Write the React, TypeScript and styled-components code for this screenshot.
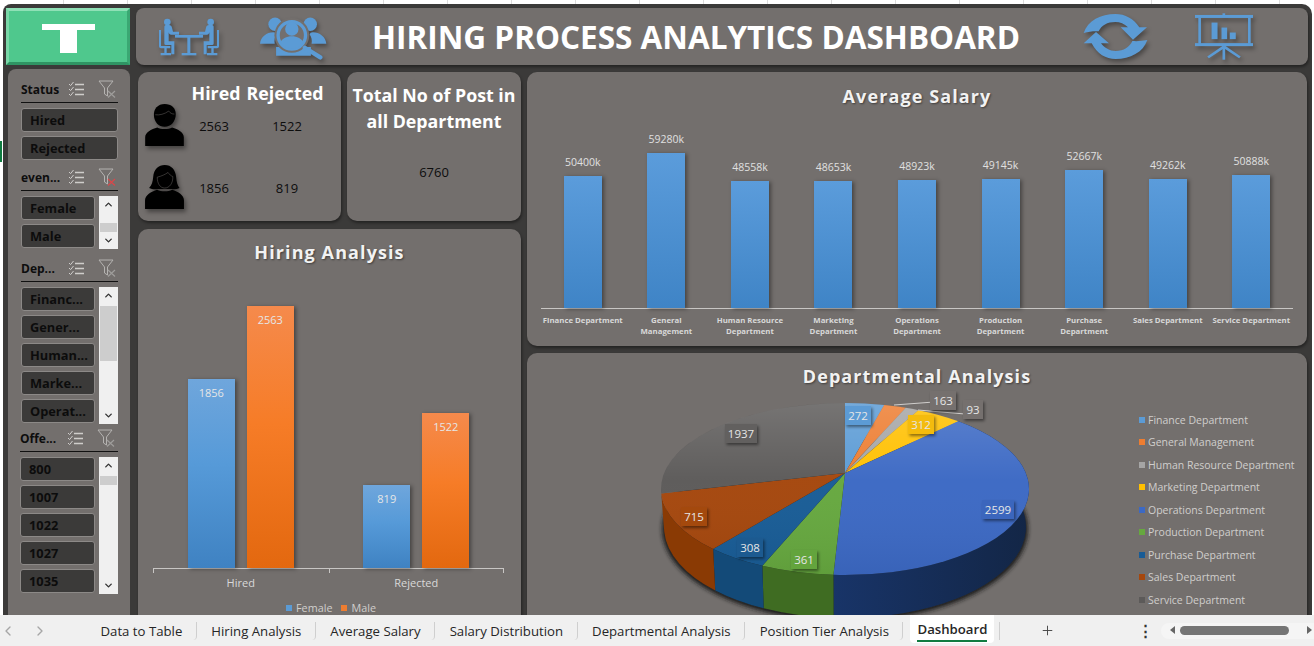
import React from "react";
import styled, { createGlobalStyle } from "styled-components";
import { ChevronLeft, ChevronRight, ChevronUp, ChevronDown, Plus } from "lucide-react";

const GlobalStyle = createGlobalStyle`
  html, body {
    margin: 0;
    padding: 0;
    overflow: hidden;
    background: #ffffff;
    font-family: "Open Sans", "Noto Sans", sans-serif;
  }
`;

const Page = styled.div`
  width: 1314px;
  height: 646px;
  display: flex;
  flex-direction: column;
  overflow: hidden;
`;

const Sheet = styled.div`
  position: relative;
  height: 616px;
  box-sizing: border-box;
  padding: 4px 2px 0 3px;
  background: repeating-linear-gradient(90deg, #ffffff 0 63px, #dcdcdc 63px 64px);
  border-top: 1px solid #c4c4c4;
  margin-top: -1px;
`;

const SelectedRow = styled.span`
  position: absolute;
  left: 0;
  top: 141px;
  width: 2px;
  height: 21px;
  background: #107c41;
`;

const Board = styled.div`
  height: 611px;
  box-sizing: border-box;
  padding: 4px 4px 0 3px;
  background: #3b3a39;
  border-radius: 8px 10px 0 0;
  overflow: hidden;
`;

const TopRow = styled.div`
  display: flex;
  gap: 6px;
  height: 57px;
`;

const Logo = styled.div`
  width: 124px;
  height: 57px;
  box-sizing: border-box;
  display: flex;
  justify-content: center;
  padding-top: 13px;
  background: #4fc88d;
  border-style: solid;
  border-width: 3px;
  border-color: #8fe0b6 #3aa873 #2f9463 #7ad8a8;
`;

const LogoMark = styled.span`
  position: relative;
  width: 53px;
  height: 6px;
  background: #ffffff;

  &::after {
    content: "";
    position: absolute;
    left: 18px;
    top: 6px;
    width: 17px;
    height: 23px;
    background: #ffffff;
  }
`;

const Banner = styled.header`
  flex: 1;
  display: flex;
  align-items: center;
  padding-left: 23px;
  background: #736f6d;
  border-radius: 8px;
  box-shadow: 1px 2px 3px rgba(0, 0, 0, 0.4);
`;

const BannerIcon = styled.svg<{ $gap: number }>`
  margin-right: ${(p) => p.$gap}px;
  flex: none;
  filter: drop-shadow(2px 3px 2px rgba(0, 0, 0, 0.35));
`;

const BannerTitle = styled.h1`
  margin: 0 63px 0 0;
  width: 648px;
  flex: none;
  text-align: center;
  white-space: nowrap;
  color: #ffffff;
  font-size: 31.5px;
  font-weight: 700;
  line-height: 40px;
`;

const MainRow = styled.div`
  display: flex;
  margin-top: 4px;
`;

const SlicerPanel = styled.aside`
  width: 122px;
  height: 560px;
  margin: 0 8px 0 2px;
  box-sizing: border-box;
  padding: 11px 12px 0 13px;
  background: #736f6d;
  border-radius: 8px 8px 0 0;
`;

const Slicer = styled.section<{ $top?: number; $shift?: number }>`
  margin-top: ${(p) => p.$top ?? 0}px;
  margin-left: ${(p) => p.$shift ?? 0}px;
`;

const SlicerHead = styled.div`
  height: 23px;
  box-sizing: border-box;
  padding-bottom: 4px;
  display: flex;
  align-items: center;
  border-bottom: 1px solid #111111;
  font-size: 12px;
  font-weight: 700;
  color: #0d0d0d;
`;

const SlicerName = styled.span`
  width: 47px;
  white-space: nowrap;
`;

const SlicerIcon = styled.svg<{ $gap?: number }>`
  margin-left: ${(p) => p.$gap ?? 0}px;
  flex: none;
`;

const SlicerBody = styled.div`
  display: flex;
  gap: 4px;
  margin-top: 5px;
`;

const SlicerItems = styled.div`
  flex: 1;
  display: flex;
  flex-direction: column;
  gap: 4px;
`;

const SlicerItem = styled.div`
  height: 24px;
  box-sizing: border-box;
  padding-left: 8px;
  display: flex;
  align-items: center;
  background: #3b3a39;
  border: 1px solid #8c8987;
  border-radius: 3px;
  color: #0c0c0c;
  font-size: 12.8px;
  font-weight: 700;
  white-space: nowrap;
`;

const ScrollTrack = styled.div`
  width: 19px;
  flex: none;
  margin-bottom: -1px;
  display: flex;
  flex-direction: column;
  align-items: center;
  background: #f0f0f0;
  color: #333333;
`;

const ScrollArrow = styled.span<{ $down?: boolean }>`
  height: 17px;
  display: flex;
  align-items: center;
  margin-top: ${(p) => (p.$down ? "auto" : "0")};
`;

const ScrollThumb = styled.span<{ $top: number; $size: number }>`
  width: 17px;
  height: ${(p) => p.$size}px;
  margin-top: ${(p) => p.$top}px;
  background: #cdcdcd;
`;

const MiddleColumn = styled.div`
  width: 383px;
  margin: 3px 6px 0 0;
  display: flex;
  flex-direction: column;
  gap: 8px;
`;

const Card = styled.div`
  background: #736f6d;
  border-radius: 10px;
  box-shadow: 1px 2px 3px rgba(0, 0, 0, 0.4);
`;

const StatRow = styled.div`
  display: flex;
  gap: 6px;
  height: 149px;
`;

const StatCard = styled(Card)`
  width: 203px;
  box-sizing: border-box;
  padding: 11px 0 0 7px;
  display: grid;
  grid-template-columns: 47px 44px 102px;
  grid-template-rows: 20px 44px 62px;
  align-items: center;
  justify-items: center;
  color: #0d0d0d;
  font-size: 13px;
`;

const StatHead = styled.div<{ $nudge: number }>`
  margin-left: ${(p) => p.$nudge}px;
  color: #ffffff;
  font-size: 17.8px;
  font-weight: 700;
  white-space: nowrap;
`;

const PersonIcon = styled.svg<{ $second?: boolean }>`
  justify-self: start;
  margin-top: ${(p) => (p.$second ? "18px" : "0")};
  filter: drop-shadow(2px 3px 2px rgba(0, 0, 0, 0.4));
`;

const StatNumber = styled.div<{ $second?: boolean }>`
  margin-top: ${(p) => (p.$second ? "20px" : "2px")};
`;

const TotalCard = styled(Card)`
  flex: 1;
  padding-top: 10px;
  text-align: center;
  color: #0d0d0d;
  font-size: 13px;
`;

const TotalTitle = styled.div`
  color: #ffffff;
  font-size: 17.8px;
  font-weight: 700;
  line-height: 26px;
  margin-bottom: 29px;
`;

const HiringCard = styled(Card)`
  height: 400px;
  padding-top: 13px;
  border-radius: 10px 10px 0 0;
`;

const ChartTitle = styled.h2`
  margin: 0;
  text-align: center;
  color: #f2f2f2;
  font-size: 18px;
  font-weight: 700;
  line-height: 20px;
  letter-spacing: 1.1px;
  text-shadow: 1px 1px 2px rgba(0, 0, 0, 0.45);
`;

const HiringPlot = styled.div`
  height: 306px;
  margin: 0 17px 0 15px;
  display: flex;
  align-items: flex-end;
  border-bottom: 1px solid #c8c6c4;
`;

const HiringGroup = styled.div`
  position: relative;
  flex: 1;
  display: flex;
  justify-content: center;
  align-items: flex-end;
  gap: 12px;
  height: 100%;

  &::before,
  &:last-child::after {
    content: "";
    position: absolute;
    bottom: -5px;
    left: 0;
    width: 1px;
    height: 5px;
    background: #c8c6c4;
  }

  &:last-child::after {
    left: auto;
    right: 0;
  }
`;

const HiringBar = styled.div<{ $h: number; $male?: boolean }>`
  width: 47px;
  height: ${(p) => p.$h}px;
  padding-top: 6px;
  box-sizing: border-box;
  text-align: center;
  color: #e6e6e6;
  font-size: 11px;
  line-height: 15px;
  background: ${(p) =>
    p.$male
      ? "linear-gradient(#f58a4c, #f67c27 45%, #e3680f)"
      : "linear-gradient(#6fa6dc, #569ad8 45%, #3f82c2)"};
  box-shadow: 2px 1px 4px rgba(0, 0, 0, 0.4);
`;

const AxisRow = styled.div`
  display: flex;
  margin: 0 17px 0 15px;
`;

const HiringAxisLabel = styled.div`
  flex: 1;
  padding: 6px 0 0 0;
  text-align: center;
  color: #d9d9d9;
  font-size: 11px;
  line-height: 16px;
`;

const HiringLegend = styled.div`
  display: flex;
  justify-content: center;
  gap: 9px;
  margin: 12px 0 0 3px;
`;

const LegendEntry = styled.div`
  display: flex;
  align-items: center;
  gap: 4px;
  color: #d0cecc;
  font-size: 10.8px;
  line-height: 10px;
`;

const Swatch = styled.span<{ $color: string }>`
  width: 6px;
  height: 6px;
  flex: none;
  background: ${(p) => p.$color};
`;

const RightColumn = styled.div`
  width: 780px;
  margin-top: 3px;
  display: flex;
  flex-direction: column;
  gap: 7px;
`;

const SalaryCard = styled(Card)`
  height: 274px;
  box-sizing: border-box;
  padding-top: 14px;
`;

const SalaryPlot = styled.div`
  height: 202px;
  margin: 0 14px;
  display: flex;
  border-bottom: 1px solid #c8c6c4;
`;

const SalaryColumn = styled.div`
  flex: 1;
  display: flex;
  flex-direction: column;
  justify-content: flex-end;
  align-items: center;
`;

const SalaryValue = styled.div`
  margin-bottom: 6px;
  color: #e0e0e0;
  font-size: 10.5px;
  line-height: 16px;
`;

const SalaryBar = styled.div<{ $h: number }>`
  width: 38px;
  height: ${(p) => p.$h}px;
  background: linear-gradient(#5b9cdb, #3f84c6);
  box-shadow: 2px 1px 4px rgba(0, 0, 0, 0.4);
`;

const SalaryLabels = styled.div`
  display: flex;
  margin: 6px 14px 0;
`;

const SalaryLabel = styled.div`
  flex: 1 1 0;
  min-width: 0;
  text-align: center;
  color: #d9d9d9;
  font-size: 7.8px;
  font-weight: 700;
  line-height: 11px;
  white-space: pre;
`;

const DepartmentCard = styled(Card)`
  height: 262px;
  box-sizing: border-box;
  padding-top: 13px;
  border-radius: 10px 10px 0 0;
  overflow: hidden;
`;

const DepartmentBody = styled.div`
  display: flex;
`;

const PieSvg = styled.svg`
  margin-left: 113px;
  flex: none;
`;

const PieLegend = styled.div`
  margin: 22.7px 0 0 99px;
  display: flex;
  flex-direction: column;
`;

const PieLegendEntry = styled(LegendEntry)`
  gap: 3px;
  height: 22.5px;
  white-space: nowrap;
  font-size: 10.5px;
`;

const TabBar = styled.nav`
  position: relative;
  flex: 1;
  display: flex;
  align-items: center;
  background: #f0f0f0;
  color: #262626;
  font-size: 13.2px;
`;

const TabNav = styled.div`
  width: 86px;
  flex: none;
  display: flex;
  gap: 16px;
  color: #a6a6a6;
`;

const Tab = styled.div<{ $active?: boolean }>`
  height: ${(p) => (p.$active ? "28px" : "18px")};
  box-sizing: border-box;
  margin-left: ${(p) => (p.$active ? "7px" : "0")};
  padding: ${(p) => (p.$active ? "0 7px" : "0 13.5px 0 14.5px")};
  display: flex;
  align-items: center;
  white-space: nowrap;
  border-right: ${(p) => (p.$active ? "none" : "1px solid #cfcfcf")};
  background: ${(p) => (p.$active ? "#ffffff" : "transparent")};
  border-radius: 0 0 4px 4px;
  font-weight: ${(p) => (p.$active ? 600 : 400)};
  align-self: ${(p) => (p.$active ? "flex-start" : "center")};
`;

const ActiveTabText = styled.span`
  padding-bottom: 2px;
  margin-top: 3px;
  border-bottom: 2px solid #107c41;
`;

const TabSeparator = styled.span`
  width: 1px;
  height: 18px;
  margin-left: 5px;
  background: #cfcfcf;
`;

const AddTab = styled.span`
  margin-left: 40px;
  display: flex;
  color: #444444;
`;

const SheetMenu = styled.span`
  margin-left: 83px;
  color: #333333;
  font-size: 15px;
  font-weight: 700;
  line-height: 15px;
`;

const HScroll = styled.div`
  margin-left: 8px;
  flex: 1;
  height: 16px;
  box-sizing: border-box;
  padding-left: 19px;
  display: flex;
  align-items: center;
  background: #f5f5f5;
  border-radius: 8px 0 0 8px;
`;

const HThumb = styled.span`
  width: 109px;
  height: 9px;
  border-radius: 5px;
  background: #757575;
`;

const ScrollTip = styled.span<{ $right?: boolean }>`
  position: absolute;
  top: 11px;
  left: ${(p) => (p.$right ? "1307px" : "1170px")};
  width: 0;
  height: 0;
  border-top: 4px solid transparent;
  border-bottom: 4px solid transparent;
  ${(p) => (p.$right ? "border-left: 5px solid #666;" : "border-right: 5px solid #666;")}
`;

const BLUE = "#5b9bd5";

const MeetingIcon = () => (
  <BannerIcon $gap={41} width="60" height="38" viewBox="0 0 180 112" fill={BLUE}>
    {[0, 1].map((i) => (
      <g key={i} transform={i ? "translate(180 0) scale(-1 1)" : undefined}>
        <circle cx="25" cy="11" r="10" />
        <path d="M16 25c0-3 3-5 6-5h8c5 0 8 3 9 8l3 12h18v9H36c-3 0-5-2-6-4l-1-3v27h17v39h-9V80H20c-3 0-4-2-4-5z" />
        <path d="M0 35h6v48h28v7H23v14h13v7H5v-7h11V90H6c-3 0-6-3-6-6z" />
        <rect x="48" y="50" width="45" height="8" />
      </g>
    ))}
    <rect x="85" y="55" width="9" height="50" />
    <rect x="68" y="104" width="44" height="7" />
  </BannerIcon>
);

const SearchPeopleIcon = () => (
  <BannerIcon $gap={45} width="67" height="46" viewBox="0 0 200 136" fill={BLUE}>
    <circle cx="45" cy="30" r="20" />
    <circle cx="150" cy="30" r="20" />
    <path d="M0 88c2-20 20-34 40-34 6 0 8 2 10 6-6 8-8 18-6 28z" />
    <path d="M198 88c-2-20-20-34-40-34-6 0-8 2-10 6 6 8 8 18 6 28z" />
    <path d="M48 98h104v26H48z" />
    <circle cx="95" cy="63" r="52" fill="#736f6d" />
    <circle cx="95" cy="63" r="41" fill="none" stroke={BLUE} strokeWidth="10" />
    <circle cx="95" cy="44" r="20" />
    <path d="M60 86c4-13 20-20 35-20s31 7 35 20c-8 10-21 16-35 16s-27-6-35-16z" />
    <path d="M134 100l46 29" stroke={BLUE} strokeWidth="13" strokeLinecap="round" />
  </BannerIcon>
);

const RefreshIcon = () => (
  <BannerIcon $gap={47} width="65" height="45" viewBox="0 0 195 135" fill={BLUE}>
    <path d="M2 57C14 20 54 0 97 0c30 0 55 14 72 40h23l-42 37-37-37h22C124 29 111 24 97 24c-24 0-42 10-50 28-15-1-30 1-45 5z" />
    <path d="M193 78C181 115 141 135 98 135c-30 0-55-14-72-47H2l37-34 39 34H54c11 14 26 23 44 23 24 0 42-12 50-30 15 1 30 0 45-3z" />
  </BannerIcon>
);

const BoardIcon = () => (
  <BannerIcon $gap={0} width="58" height="47" viewBox="0 0 175 140" fill={BLUE}>
    <rect x="83" y="0" width="8" height="6" />
    <rect x="0" y="5" width="175" height="9" />
    <rect x="10" y="14" width="8" height="78" />
    <rect x="160" y="14" width="8" height="78" />
    <rect x="0" y="90" width="175" height="9" />
    <rect x="50" y="28" width="18" height="50" />
    <rect x="80" y="43" width="17" height="35" />
    <rect x="105" y="58" width="18" height="20" />
    <rect x="83" y="99" width="8" height="41" />
    <path d="M84 98l6 6-48 32-5-6zM91 98l-6 6 48 32 5-6z" />
  </BannerIcon>
);

const MaleIcon = () => (
  <PersonIcon width="39" height="42" viewBox="0 0 115 125" fill="#000000">
    <path d="M26 36C24 14 38 0 58 0s33 12 33 30c0 22-14 38-33 38S28 54 26 36z" />
    <path d="M30 32c12 2 28-2 40-11 4 6 10 9 17 9" fill="none" stroke="#6f6b69" strokeWidth="1.4" />
    <path d="M0 125v-26c0-14 18-24 36-29 12 6 32 6 44 0 18 5 35 15 35 29v26z" />
  </PersonIcon>
);

const FemaleIcon = () => (
  <PersonIcon $second width="39" height="44" viewBox="0 0 115 130" fill="#000000">
    <path d="M24 36C26 12 40 0 58 0c20 0 32 14 34 36 1 14 4 24 10 32-8 4-16 5-24 3H38c-8 2-18 1-26-3 8-8 11-20 12-32z" />
    <path d="M36 36c12-3 24-8 32-14 4 6 8 10 14 12 1 20-10 34-24 34S36 54 36 36z" fill="none" stroke="#6f6b69" strokeWidth="1.4" />
    <path d="M0 130v-26c0-14 18-26 36-31 12 6 32 6 44 0 18 5 35 17 35 31v26z" />
  </PersonIcon>
);

const CheckListIcon = () => (
  <SlicerIcon width="17" height="16" viewBox="0 0 17 16" fill="none" stroke="#cfcdcb" strokeWidth="1">
    <path d="M1 3l1.6 1.6L5.5 1M1 8l1.6 1.6L5.5 6M1 13l1.6 1.6L5.5 11" />
    <path d="M7 3.5h9M7 8.5h9M7 13.5h9" strokeWidth="1.3" />
  </SlicerIcon>
);

const FilterClearIcon = ({ active }: { active?: boolean }) => (
  <SlicerIcon $gap={13} width="18" height="18" viewBox="0 0 18 18" fill="none" stroke="#b5b3b1" strokeWidth="1">
    <path d="M1 1h14L9.5 8v8L6.5 14V8z" />
    <path d="M10 11l7 6.5M17 11l-7 6.5" stroke={active ? "#d9474a" : "#9f9d9b"} strokeWidth="1.2" />
  </SlicerIcon>
);

const VScroll = ({ top, size }: { top: number; size: number }) => (
  <ScrollTrack>
    <ScrollArrow>
      <ChevronUp size={11} strokeWidth={3} />
    </ScrollArrow>
    <ScrollThumb $top={top} $size={size} />
    <ScrollArrow $down>
      <ChevronDown size={11} strokeWidth={3} />
    </ScrollArrow>
  </ScrollTrack>
);

const salaries = [
  { name: "Finance Department", value: 50400 },
  { name: "General\nManagement", value: 59280 },
  { name: "Human Resource\nDepartment", value: 48558 },
  { name: "Marketing\nDepartment", value: 48653 },
  { name: "Operations\nDepartment", value: 48923 },
  { name: "Production\nDepartment", value: 49145 },
  { name: "Purchase\nDepartment", value: 52667 },
  { name: "Sales Department", value: 49262 },
  { name: "Service Department", value: 50888 },
];

const CX = 845;
const CY = 489;
const RX = 184;
const RY = 86;
const BY = 527;
const BRX = 181;
const BRY = 91;

const rad = (d: number) => (d * Math.PI) / 180;
const top = (d: number) => `${CX + RX * Math.cos(rad(d))} ${CY + RY * Math.sin(rad(d))}`;
const bottom = (d: number) => `${CX + BRX * Math.cos(rad(d))} ${BY + BRY * Math.sin(rad(d))}`;

const slices = [
  { name: "Finance Department", from: -90, to: -77.7, color: "#5b9bd5" },
  { name: "General Management", from: -77.7, to: -70.7, color: "#ed7d31" },
  { name: "Human Resource Department", from: -70.7, to: -66.5, color: "#a5a5a5" },
  { name: "Marketing Department", from: -66.5, to: -52, color: "#ffc000" },
  { name: "Operations Department", from: -52, to: 93.6, color: "#3c69c4", wall: "url(#wallOps)" },
  { name: "Production Department", from: 93.6, to: 116.7, color: "#66a83f", wall: "#3f6c22" },
  { name: "Purchase Department", from: 116.7, to: 135.8, color: "#185c96", wall: "#134a78" },
  { name: "Sales Department", from: 135.8, to: 177, color: "#a5470d", wall: "#8a3a04" },
  { name: "Service Department", from: 177, to: 270, color: "#5c5a59" },
];

const pieLabels = [
  { text: "272", x: 858, y: 416, w: 26, fill: "#5b9bd5" },
  { text: "163", x: 943, y: 401, w: 26, fill: "#74706e" },
  { text: "93", x: 973, y: 410, w: 20, fill: "#74706e" },
  { text: "312", x: 921, y: 425, w: 26, fill: "#f4bb08" },
  { text: "2599", x: 998, y: 510, w: 32, fill: "#3a66bd" },
  { text: "1937", x: 741, y: 434, w: 32, fill: "#62605f" },
  { text: "715", x: 694, y: 517, w: 26, fill: "#a44a10" },
  { text: "308", x: 750, y: 548, w: 26, fill: "#1c5a90" },
  { text: "361", x: 804, y: 560, w: 26, fill: "#63a43e" },
];

const DepartmentPie = () => (
  <PieSvg width="400" height="240" viewBox="640 386 400 240">
    <defs>
      <linearGradient id="wallOps" x1="0" x2="1" y1="0" y2="0">
        <stop offset="0" stopColor="#183468" />
        <stop offset="1" stopColor="#132646" />
      </linearGradient>
      <linearGradient id="sheen" x1="0" x2="0" y1="0" y2="1">
        <stop offset="0" stopColor="#ffffff" stopOpacity="0.16" />
        <stop offset="0.45" stopColor="#ffffff" stopOpacity="0.02" />
        <stop offset="1" stopColor="#000000" stopOpacity="0.06" />
      </linearGradient>
      <filter id="labelShadow" x="-30%" y="-30%" width="170%" height="170%">
        <feDropShadow dx="1.5" dy="2" stdDeviation="1.5" floodColor="#000000" floodOpacity="0.45" />
      </filter>
      <filter id="baseShadow" x="-10%" y="-10%" width="120%" height="120%">
        <feGaussianBlur stdDeviation="2" />
      </filter>
    </defs>
    <ellipse cx={CX} cy={BY + 2} rx={BRX + 2} ry={BRY + 1} fill="#1c1b1a" filter="url(#baseShadow)" />
    {slices
      .filter((s) => s.wall)
      .map((s) => (
        <path
          key={s.name}
          d={`M${top(s.from)} A${RX} ${RY} 0 0 1 ${top(s.to)} L${bottom(s.to)} A${BRX} ${BRY} 0 0 0 ${bottom(s.from)} Z`}
          fill={s.wall}
        />
      ))}
    {slices.map((s) => (
      <path
        key={s.name}
        d={`M${CX} 473 L${top(s.from)} A${RX} ${RY} 0 ${s.to - s.from > 180 ? 1 : 0} 1 ${top(s.to)} Z`}
        fill={s.color}
      />
    ))}
    <ellipse cx={CX} cy={CY} rx={RX} ry={RY} fill="url(#sheen)" />
    <path d="M894 405L934 402M918 410L965 414" stroke="#d0cecc" strokeWidth="1" fill="none" />
    {pieLabels.map((l) => (
      <g key={l.text}>
        <rect x={l.x - l.w / 2} y={l.y - 10} width={l.w} height={19} fill={l.fill} filter="url(#labelShadow)" />
        <text x={l.x} y={l.y + 4} textAnchor="middle" fill="#e6e6e6" fontSize="11.5" fontFamily="Open Sans">
          {l.text}
        </text>
      </g>
    ))}
  </PieSvg>
);

const App = (): JSX.Element => {
  return (
    <Page>
      <GlobalStyle />
      <Sheet>
        <SelectedRow />
        <Board>
          <TopRow>
            <Logo>
              <LogoMark />
            </Logo>
            <Banner>
              <MeetingIcon />
              <SearchPeopleIcon />
              <BannerTitle>HIRING PROCESS ANALYTICS DASHBOARD</BannerTitle>
              <RefreshIcon />
              <BoardIcon />
            </Banner>
          </TopRow>
          <MainRow>
            <SlicerPanel>
              <Slicer>
                <SlicerHead>
                  <SlicerName>Status</SlicerName>
                  <CheckListIcon />
                  <FilterClearIcon />
                </SlicerHead>
                <SlicerBody>
                  <SlicerItems>
                    <SlicerItem>Hired</SlicerItem>
                    <SlicerItem>Rejected</SlicerItem>
                  </SlicerItems>
                </SlicerBody>
              </Slicer>
              <Slicer $top={8}>
                <SlicerHead>
                  <SlicerName>even...</SlicerName>
                  <CheckListIcon />
                  <FilterClearIcon active />
                </SlicerHead>
                <SlicerBody>
                  <SlicerItems>
                    <SlicerItem>Female</SlicerItem>
                    <SlicerItem>Male</SlicerItem>
                  </SlicerItems>
                  <VScroll top={10} size={9} />
                </SlicerBody>
              </Slicer>
              <Slicer $top={11}>
                <SlicerHead>
                  <SlicerName>Dep...</SlicerName>
                  <CheckListIcon />
                  <FilterClearIcon />
                </SlicerHead>
                <SlicerBody>
                  <SlicerItems>
                    <SlicerItem>Financ...</SlicerItem>
                    <SlicerItem>Gener...</SlicerItem>
                    <SlicerItem>Human...</SlicerItem>
                    <SlicerItem>Marke...</SlicerItem>
                    <SlicerItem>Operat...</SlicerItem>
                  </SlicerItems>
                  <VScroll top={2} size={55} />
                </SlicerBody>
              </Slicer>
              <Slicer $top={6} $shift={-1}>
                <SlicerHead>
                  <SlicerName>Offe...</SlicerName>
                  <CheckListIcon />
                  <FilterClearIcon />
                </SlicerHead>
                <SlicerBody>
                  <SlicerItems>
                    <SlicerItem>800</SlicerItem>
                    <SlicerItem>1007</SlicerItem>
                    <SlicerItem>1022</SlicerItem>
                    <SlicerItem>1027</SlicerItem>
                    <SlicerItem>1035</SlicerItem>
                  </SlicerItems>
                  <VScroll top={2} size={9} />
                </SlicerBody>
              </Slicer>
            </SlicerPanel>

            <MiddleColumn>
              <StatRow>
                <StatCard>
                  <span />
                  <StatHead $nudge={4}>Hired</StatHead>
                  <StatHead $nudge={-4}>Rejected</StatHead>
                  <MaleIcon />
                  <StatNumber>2563</StatNumber>
                  <StatNumber>1522</StatNumber>
                  <FemaleIcon />
                  <StatNumber $second>1856</StatNumber>
                  <StatNumber $second>819</StatNumber>
                </StatCard>
                <TotalCard>
                  <TotalTitle>
                    Total No of Post in
                    <br />
                    all Department
                  </TotalTitle>
                  6760
                </TotalCard>
              </StatRow>
              <HiringCard>
                <ChartTitle>Hiring Analysis</ChartTitle>
                <HiringPlot>
                  <HiringGroup>
                    <HiringBar $h={189}>1856</HiringBar>
                    <HiringBar $h={262} $male>
                      2563
                    </HiringBar>
                  </HiringGroup>
                  <HiringGroup>
                    <HiringBar $h={83}>819</HiringBar>
                    <HiringBar $h={155} $male>
                      1522
                    </HiringBar>
                  </HiringGroup>
                </HiringPlot>
                <AxisRow>
                  <HiringAxisLabel>Hired</HiringAxisLabel>
                  <HiringAxisLabel>Rejected</HiringAxisLabel>
                </AxisRow>
                <HiringLegend>
                  <LegendEntry>
                    <Swatch $color="#5b9bd5" />
                    Female
                  </LegendEntry>
                  <LegendEntry>
                    <Swatch $color="#ed7d31" />
                    Male
                  </LegendEntry>
                </HiringLegend>
              </HiringCard>
            </MiddleColumn>

            <RightColumn>
              <SalaryCard>
                <ChartTitle>Average Salary</ChartTitle>
                <SalaryPlot>
                  {salaries.map((s) => (
                    <SalaryColumn key={s.name}>
                      <SalaryValue>{s.value}k</SalaryValue>
                      <SalaryBar $h={Math.round(s.value * 0.002615)} />
                    </SalaryColumn>
                  ))}
                </SalaryPlot>
                <SalaryLabels>
                  {salaries.map((s) => (
                    <SalaryLabel key={s.name}>{s.name}</SalaryLabel>
                  ))}
                </SalaryLabels>
              </SalaryCard>
              <DepartmentCard>
                <ChartTitle>Departmental Analysis</ChartTitle>
                <DepartmentBody>
                  <DepartmentPie />
                  <PieLegend>
                    {slices.map((s) => (
                      <PieLegendEntry key={s.name}>
                        <Swatch $color={s.color} />
                        {s.name}
                      </PieLegendEntry>
                    ))}
                  </PieLegend>
                </DepartmentBody>
              </DepartmentCard>
            </RightColumn>
          </MainRow>
        </Board>
      </Sheet>
      <TabBar>
        <TabNav>
          <ChevronLeft size={16} />
          <ChevronRight size={16} />
        </TabNav>
        <Tab>Data to Table</Tab>
        <Tab>Hiring Analysis</Tab>
        <Tab>Average Salary</Tab>
        <Tab>Salary Distribution</Tab>
        <Tab>Departmental Analysis</Tab>
        <Tab>Position Tier Analysis</Tab>
        <Tab $active>
          <ActiveTabText>Dashboard</ActiveTabText>
        </Tab>
        <TabSeparator />
        <AddTab>
          <Plus size={15} strokeWidth={1.5} />
        </AddTab>
        <SheetMenu>⋮</SheetMenu>
        <HScroll>
          <HThumb />
        </HScroll>
        <ScrollTip />
        <ScrollTip $right />
      </TabBar>
    </Page>
  );
};

export default App;
